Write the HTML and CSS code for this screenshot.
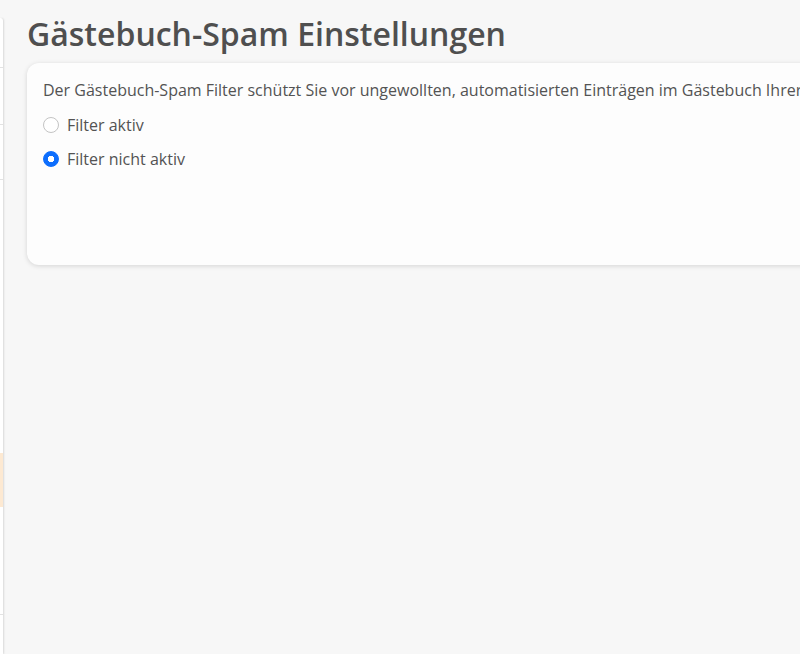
FILE: index.html
```html
<!DOCTYPE html>
<html lang="de">
<head>
    <meta charset="UTF-8">
    <meta name="viewport" content="width=device-width, initial-scale=1.0">
    <title>Gästebuch-Spam Einstellungen</title>
    <link rel="stylesheet" href="styles.css">
</head>
<body>
    <div class="layout">
        <aside class="sidebar">
            <div class="side-item h50"></div>
            <div class="side-item h58"></div>
            <div class="side-item h56"></div>
            <div class="side-item h277 plain"></div>
            <div class="side-item h55 active"></div>
            <div class="side-item h64 plain"></div>
            <div class="side-item h47"></div>
            <div class="side-item h40 plain"></div>
        </aside>

        <main class="content">
            <h1>Gästebuch-Spam Einstellungen</h1>

            <div class="card">
                <p>Der Gästebuch-Spam Filter schützt Sie vor ungewollten, automatisierten Einträgen im Gästebuch Ihrer Homepage.</p>

                <div class="form-check">
                    <input type="radio" name="spamfilter" id="filter-on" value="1">
                    <label for="filter-on">Filter aktiv</label>
                </div>
                <div class="form-check">
                    <input type="radio" name="spamfilter" id="filter-off" value="0" checked>
                    <label for="filter-off">Filter nicht aktiv</label>
                </div>
            </div>
        </main>
    </div>
</body>
</html>
```

FILE: styles.css
```css
html, body {
    margin: 0;
    height: 100%;
    overflow: hidden;
}
body {
    font-family: "Open Sans", Arial, sans-serif;
    background-color: #f7f7f7;
    color: #535353;
}
.layout {
    display: flex;
    height: 100%;
}
.sidebar {
    flex: 0 0 3px;
    margin-top: 18px;
    background-color: #ffffff;
    border-top-right-radius: 6px;
    box-shadow: 1px 0 2px rgba(0, 0, 0, 0.12);
    display: flex;
    flex-direction: column;
}
.side-item {
    border-bottom: 1px solid #e2e2e2;
}
.side-item.plain {
    border-bottom: none;
}
.side-item.active {
    background-color: #fde9d2;
    border-bottom: none;
}
.h50 { height: 50px; }
.h58 { height: 57px; }
.h56 { height: 55px; }
.h277 { height: 277px; }
.h55 { height: 55px; }
.h64 { height: 63px; }
.h47 { height: 46px; }
.h40 { height: 40px; }

.content {
    flex: 0 0 1000px;
    padding: 14px 0 0 24px;
}
.content h1 {
    margin: 0 0 9px 0;
    font-size: 32px;
    font-weight: 600;
    line-height: 40px;
    color: #4f4f4f;
}
.card {
    min-height: 168px;
    background-color: #fdfdfd;
    border-radius: 12px;
    box-shadow: 0 1px 5px rgba(0, 0, 0, 0.14);
    padding: 15px 16px 19px 16px;
    white-space: nowrap;
}
.card p {
    margin: 0 0 6px 0;
    font-size: 16px;
    line-height: 24px;
}
.form-check {
    display: flex;
    align-items: center;
    gap: 8px;
    height: 34px;
    font-size: 16px;
}
.form-check input {
    appearance: none;
    margin: 0;
    width: 16px;
    height: 16px;
    border: 1px solid #c4c4c4;
    border-radius: 50%;
    background-color: #ffffff;
}
.form-check input:checked {
    border-color: #0d6efd;
    background: radial-gradient(circle, #ffffff 0 3px, #0d6efd 3.5px);
}
```
